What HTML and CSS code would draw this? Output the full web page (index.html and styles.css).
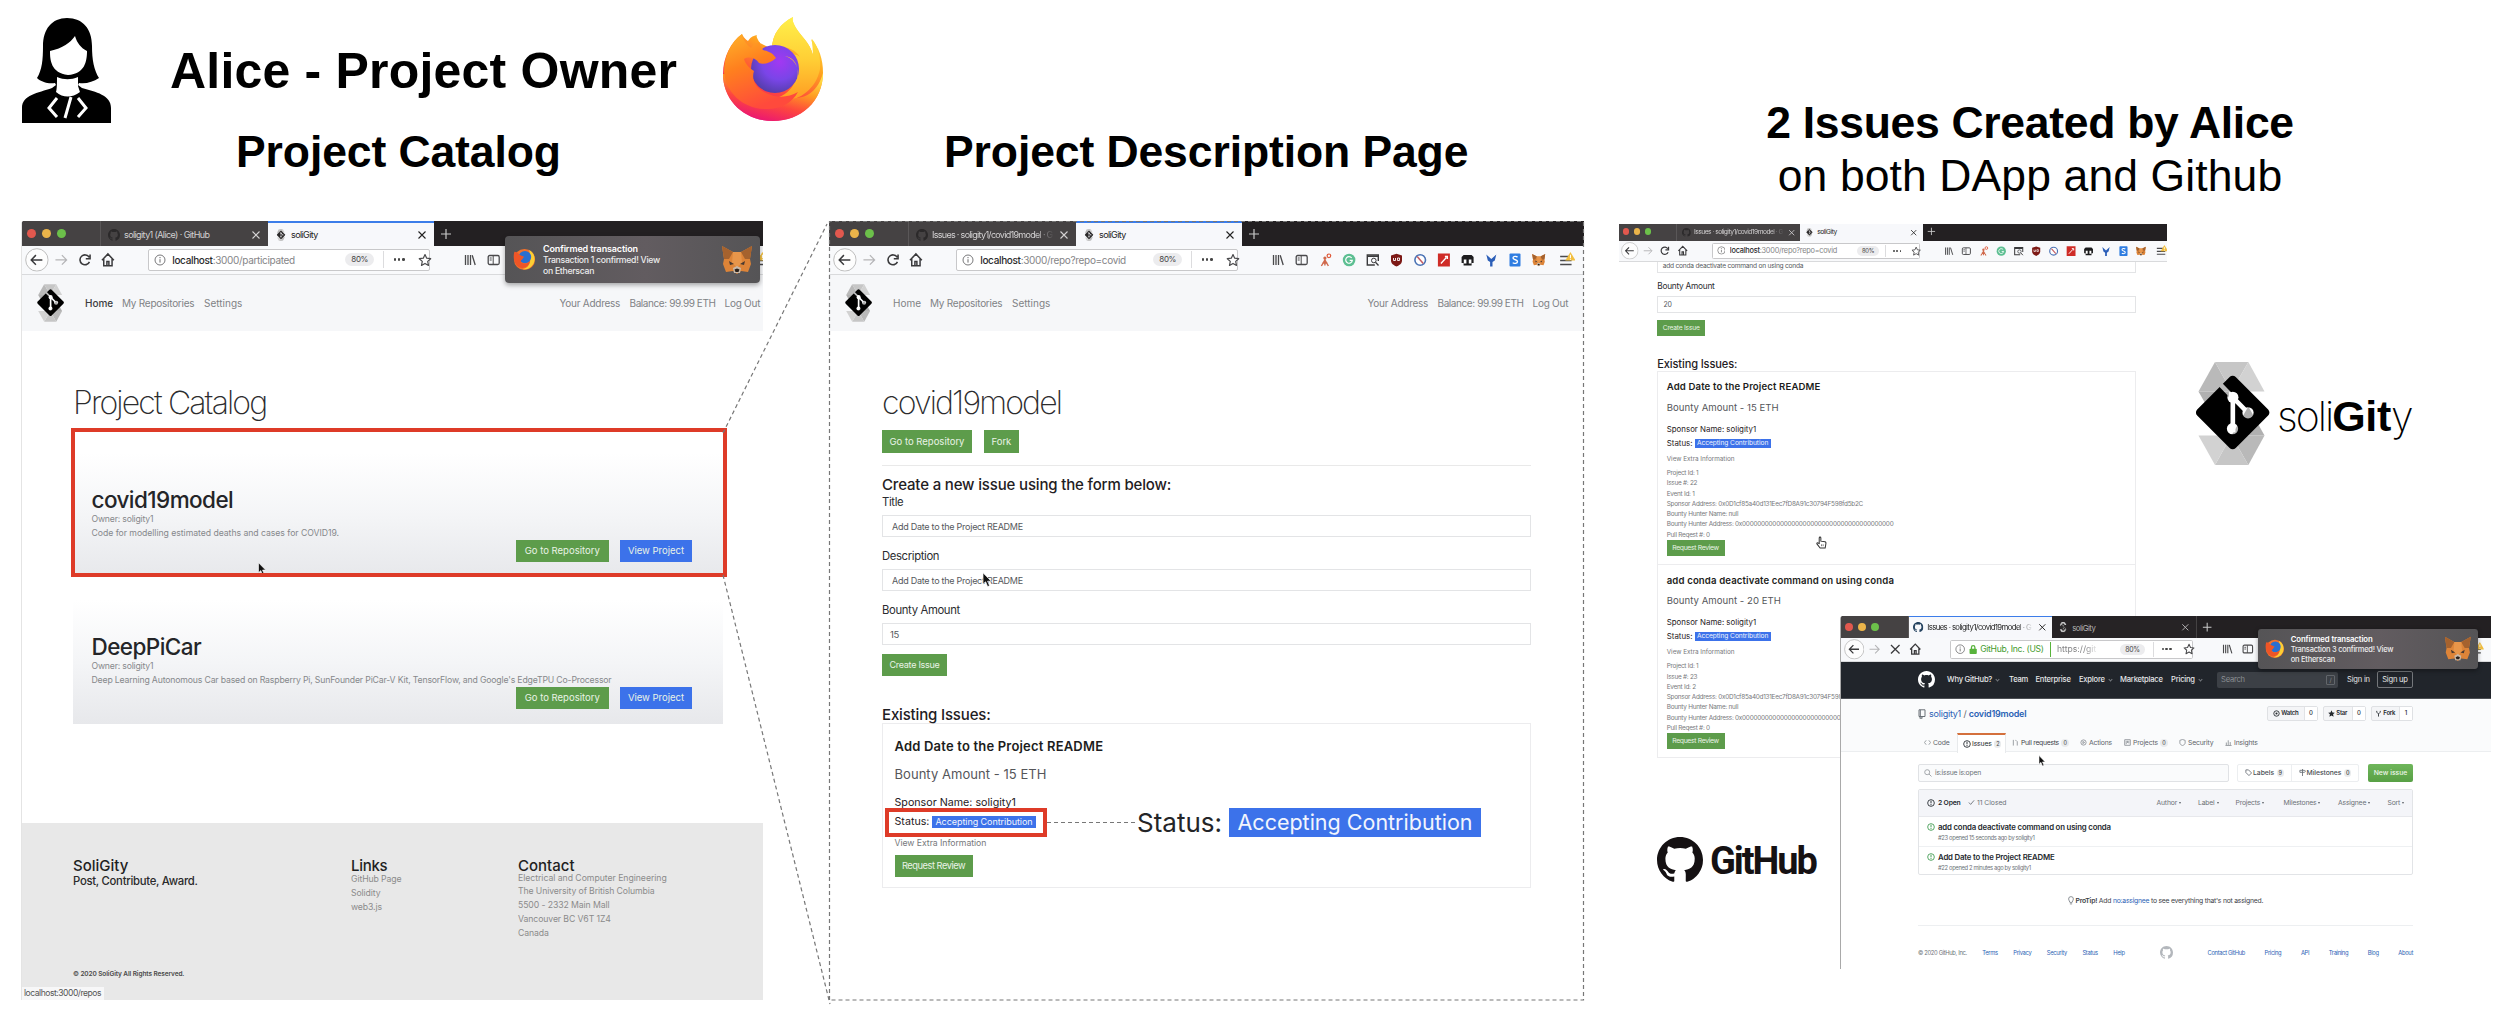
FILE: index.html
```html
<!DOCTYPE html>
<html lang="en">
<head>
<meta charset="utf-8">
<title>soliGity - project owner walkthrough</title>
<link rel="stylesheet" href="styles.css">
</head>
<body>
<svg class="defs" aria-hidden="true">
  <defs>
    <linearGradient id="ff-body" x1="0.8" y1="0" x2="0.3" y2="1"><stop offset="0" stop-color="#fff44f"/><stop offset=".35" stop-color="#ffa61f"/><stop offset=".65" stop-color="#ff4a3a"/><stop offset="1" stop-color="#e8107a"/></linearGradient>
    <linearGradient id="ff-flame" x1="0.5" y1="0" x2="0.5" y2="1"><stop offset="0" stop-color="#fff04a"/><stop offset=".5" stop-color="#ffcf35"/><stop offset="1" stop-color="#ff9a22"/></linearGradient>
    <linearGradient id="ff-fox" x1="0" y1="0" x2="0.4" y2="1"><stop offset="0" stop-color="#ffb52a"/><stop offset=".45" stop-color="#ff801e"/><stop offset="1" stop-color="#ff4a3c"/></linearGradient>
    <radialGradient id="ff-globe" cx=".6" cy=".35" r=".75"><stop offset="0" stop-color="#a238f2"/><stop offset=".5" stop-color="#7a45e8"/><stop offset="1" stop-color="#4a3c9c"/></radialGradient>
    <mask id="branch-cut" maskUnits="userSpaceOnUse" x="90" y="80" width="260" height="340">
      <rect x="90" y="80" width="260" height="340" fill="#fff"/>
      <g stroke="#000" stroke-width="14" fill="none"><path d="M176 158 217 200 263 247M217 200V295"/></g>
      <g fill="#000"><circle cx="217" cy="200" r="17"/><circle cx="263" cy="247" r="17"/><circle cx="216" cy="295" r="17"/></g>
    </mask>
  </defs>
  <symbol id="octocat" viewBox="0 0 16 16"><path d="M8 0C3.58 0 0 3.58 0 8c0 3.54 2.29 6.53 5.47 7.59.4.07.55-.17.55-.38 0-.19-.01-.82-.01-1.49-2.01.37-2.53-.49-2.69-.94-.09-.23-.48-.94-.82-1.13-.28-.15-.68-.52-.01-.53.63-.01 1.08.58 1.23.82.72 1.21 1.87.87 2.33.66.07-.52.28-.87.51-1.07-1.78-.2-3.64-.89-3.64-3.95 0-.87.31-1.59.82-2.15-.08-.2-.36-1.02.08-2.12 0 0 .67-.21 2.2.82.64-.18 1.32-.27 2-.27s1.36.09 2 .27c1.53-1.04 2.2-.82 2.2-.82.44 1.1.16 1.92.08 2.12.51.56.82 1.27.82 2.15 0 3.07-1.87 3.75-3.65 3.95.29.25.54.73.54 1.48 0 1.07-.01 1.93-.01 2.2 0 .21.15.46.55.38A8.01 8.01 0 0016 8c0-4.42-3.58-8-8-8z"/></symbol>
  <symbol id="soligity" viewBox="100 90 232 318">
    <path fill="#b9b9b9" d="M163 93 113 182h100z"/><path fill="#c6c6c6" d="M163 93h101l-51 89z"/><path fill="#d2d2d2" d="m264 93 49 89H213z"/><path fill="#b0b0b0" d="M113 182h100l-50 88z"/>
    <path fill="#b9b9b9" d="m264 405 49-89H213z"/><path fill="#c6c6c6" d="M264 405H163l50-89z"/><path fill="#d2d2d2" d="m163 405-50-89h100z"/><path fill="#b0b0b0" d="M313 316H213l51-88z"/>
    <path fill="#fff" d="M205 184h20v122h-20z"/>
    <g mask="url(#branch-cut)"><rect x="134" y="163.500" width="165" height="165" rx="13" transform="rotate(45 216.500 246)"/></g>
  </symbol>
  <symbol id="back" viewBox="0 0 24 24"><circle cx="12" cy="12" r="11.300" fill="#fdfdfd" stroke="#bdbdbd"/><path d="M17.500 12h-11M11 7.200 6.300 12l4.700 4.800" fill="none" stroke="#3a3a3c" stroke-width="1.500"/></symbol>
  <symbol id="forward" viewBox="0 0 24 24"><path d="M6.500 12h11M13 7.200l4.700 4.800-4.700 4.800" fill="none" stroke="#b5b5b7" stroke-width="1.300"/></symbol>
  <symbol id="reload" viewBox="0 0 24 24"><path d="M16.300 9.300A5 5 0 1 0 16.600 14M17.200 6.500v4.300h-4.300" fill="none" stroke="#3a3a3c" stroke-width="1.600"/></symbol>
  <symbol id="stop" viewBox="0 0 24 24"><path d="m7 7 10 10M17 7 7 17" fill="none" stroke="#3a3a3c" stroke-width="1.500"/></symbol>
  <symbol id="home" viewBox="0 0 24 24"><path d="M6 12.300 12 6l6 6.300M7.800 11v6.800h8.400V11M11 17.500v-4h2v4" fill="none" stroke="#3a3a3c" stroke-width="1.500"/></symbol>
  <symbol id="info" viewBox="0 0 12 12"><circle cx="6" cy="6" r="5" fill="none" stroke="#6a6a6c" stroke-width=".9"/><path d="M6 5.200v3.400M6 3v1.200" stroke="#6a6a6c"/></symbol>
  <symbol id="lock" viewBox="0 0 12 12"><path d="M4 6V4a2 2 0 0 1 4 0v2" fill="none" stroke="#58b33c" stroke-width="1.500"/><rect x="1.800" y="5.500" width="8.400" height="6" rx="1" fill="#58b33c"/></symbol>
  <symbol id="star" viewBox="0 0 14 14"><path d="m7 1.500 1.700 3.700 4 .5-3 2.700.8 4L7 10.400l-3.500 2 .8-4-3-2.700 4-.5z" fill="none" stroke="#4a4a4c" stroke-width="1.200" stroke-linejoin="round"/></symbol>
  <symbol id="x" viewBox="0 0 10 10"><path d="m1.500 1.500 7 7m0-7-7 7" fill="none" stroke="currentColor" stroke-width="1.100"/></symbol>
  <symbol id="plus" viewBox="0 0 12 12"><path d="M6 1v10M1 6h10" fill="none" stroke="#c9c9c9" stroke-width="1.200"/></symbol>
  <symbol id="library" viewBox="0 0 14 14"><path d="M2.500 2v10M5 2v10M7.500 2v10M9.200 2.200l3 9.800" fill="none" stroke="#4a4a4c" stroke-width="1.300"/></symbol>
  <symbol id="sidebar" viewBox="0 0 14 14"><rect x="1.500" y="2.500" width="11" height="9" rx="1.500" fill="none" stroke="#4a4a4c" stroke-width="1.300"/><path d="M6.500 2.500v9M3 5h2M3 7h2" stroke="#4a4a4c"/></symbol>
  <symbol id="ext-flow" viewBox="0 0 14 14"><path d="M3 13 6.500 7 10 13M6.500 7v5.500M6.500 7V4M4 10h5" stroke="#d0694c" stroke-width="1.400" fill="none"/><circle cx="6.500" cy="5" r="1.600" fill="#d0694c"/><circle cx="10.500" cy="2.800" r="1.800" fill="none" stroke="#e05a3a" stroke-width="1.200"/></symbol>
  <symbol id="ext-g" viewBox="0 0 14 14"><circle cx="7" cy="7" r="6.300" fill="#5dbf92"/><path d="M9.600 5A3.300 3.300 0 1 0 10.200 7.400H7.600" fill="none" stroke="#fff" stroke-width="1.200"/></symbol>
  <symbol id="ext-win" viewBox="0 0 14 14"><path d="M9 12H1.500V2h11v6" fill="none" stroke="#3b3b3d" stroke-width="1.400"/><path d="M1.500 3.200h11" stroke="#3b3b3d" stroke-width="1.500"/><circle cx="8" cy="7.500" r="2.300" fill="none" stroke="#3b3b3d"/><path d="m9.700 9.300 3 3.200" stroke="#3b3b3d" stroke-width="1.300"/></symbol>
  <symbol id="ext-shield" viewBox="0 0 14 14"><path d="M7 .8 12.500 2.500v5c0 3-2.500 4.800-5.500 6-3-1.200-5.500-3-5.500-6v-5z" fill="#7d1a16"/><path d="M4 5v2.500h2V5M8 5h2v2.500H8z" fill="none" stroke="#fff" stroke-width=".9"/></symbol>
  <symbol id="ext-ban" viewBox="0 0 14 14"><circle cx="7" cy="7" r="5.300" fill="#fff" stroke="#4b73b5" stroke-width="1.600"/><path d="m4 3.500 6 7" stroke="#c35b61" stroke-width="1.500"/></symbol>
  <symbol id="ext-red" viewBox="0 0 14 14"><path d="M1 .5h12v13H1z" fill="#cf2c27"/><path d="m4 10.500 5.500-6M8 3.500h2.500V6" stroke="#fff" stroke-width="1.300" fill="none"/></symbol>
  <symbol id="ext-skull" viewBox="0 0 14 14"><path d="M3 2h8l2 2v6h-2v2.500H3V10H1V4z" fill="#1c1c1e"/><path d="M3.200 6.500h2.600v4H3.200zM8.200 6.500h2.600v4H8.200z" fill="#fff"/></symbol>
  <symbol id="ext-y" viewBox="0 0 14 14"><path d="M2 1.500 7 6l5-4.500-1.500 6L8.200 9v4.500H5.800V9L3.500 7.500z" fill="#2c5fb8"/></symbol>
  <symbol id="ext-s" viewBox="0 0 14 14"><rect x="1.500" y=".5" width="11" height="13" rx="1" fill="#2f7de1"/><path d="M9.500 4.200C8.500 3 5 3 5 5s4.500 1.500 4.500 3.500S6 11 4.800 9.600" fill="none" stroke="#fff" stroke-width="1.400"/></symbol>
  <symbol id="fox" viewBox="0 0 32 30"><path d="m1 1 11 6h8l11-6-2 13 1 5-3 8-7-1-4 3-4-3-7 1-3-8 1-5z" fill="#dd8438"/><path d="m1 1 11 6-4 7-5 0zM31 1 20 7l4 7 5 0z" fill="#a5622e"/><path d="m12 7-1 11 5 4 5-4-1-11z" fill="#e8964a"/><path d="m8 16 5 3-4 1zM24 16l-5 3 4 1z" fill="#4a3a30"/><path d="m12 23 4-2 4 2-1 5h-6z" fill="#c9b9a8"/><path d="m13.500 24.500 2.500-1 2.500 1-1 2.500h-3z" fill="#2a211c"/></symbol>
  <symbol id="menu" viewBox="0 0 14 14"><path d="M1 4h9M1 7.500h10M1 11h10" stroke="#4a4a4c" stroke-width="1.400"/><path d="m10 0 4.500 7.500h-9z" fill="#f2bf3f"/><path d="M10 2.500v2.700M10 6v.8" stroke="#fff" stroke-width=".9"/></symbol>
  <symbol id="firefox-old" viewBox="0 0 24 24"><circle cx="12" cy="12" r="11" fill="#f4722c"/><path d="M17 2c5 3 6.500 8 5 13-2 5-7 8-12 7 6-1 8-6 8-10z" fill="#fccf34"/><circle cx="12.500" cy="9.500" r="6.500" fill="#2a6fd0"/><path d="M1.500 4c2 0 4 1 5 3l5 2-2 3c-2 1-2 3 1 4 3 .8 5-.4 7-2-1 6-7 8-11 6-5-2.500-7-10-5-16z" fill="#ee5527"/></symbol>
  <symbol id="pointer" viewBox="0 0 10 16"><path d="M1 .8v11.400l2.600-2.400 2 4.800 2-.9-2-4.500h3.600z" fill="#111" stroke="#fff" stroke-width=".7"/></symbol>
  <symbol id="issue" viewBox="0 0 12 12"><circle cx="6" cy="6" r="5" fill="none" stroke="currentColor" stroke-width="1.300"/><path d="M6 2.700v3.800M6 7.600v1.600" stroke="currentColor" stroke-width="1.400"/></symbol>
  <symbol id="tools" viewBox="0 0 284 14">
    <use href="#library" x="5" width="14" height="14"/><use href="#sidebar" x="28.700" width="14" height="14"/><use href="#ext-flow" x="52.400" width="14" height="14"/><use href="#ext-g" x="76.100" width="14" height="14"/><use href="#ext-win" x="99.800" width="14" height="14"/><use href="#ext-shield" x="123.500" width="14" height="14"/><use href="#ext-ban" x="147.200" width="14" height="14"/><use href="#ext-red" x="170.900" width="14" height="14"/><use href="#ext-skull" x="194.600" width="14" height="14"/><use href="#ext-y" x="218.300" width="14" height="14"/><use href="#ext-s" x="242" width="14" height="14"/><use href="#fox" x="265.700" width="14" height="14"/>
  </symbol>
</svg>

<main class="board">
  <svg class="alice" viewBox="22 18 89 105">
    <path d="M67 18c-15 0-24 11-24 28 0 14-1 24-6 32 4 4 11 6 18 5l1 2-4 3c-14 5-30 7-30 20v15h89v-15c0-13-15-16-29-20l-4-3 1-2c7 1 14-1 20-5-5-8-7-18-7-32 0-17-9-28-25-28z"/>
    <path fill="#fff" d="M75 36c-5 7-12 12-25 15 0 9 1 22 18 24 17-1 19-14 19-24-6-3-10-8-12-15zM57 77c7 3 14 3 21 0v9c2 6 2 6 2 6-8 6-17 6-24 0 1-3 1-9 1-15z"/>
    <path fill="none" stroke="#fff" stroke-width="3" d="m57 98-8 10 8 9m21-19 8 10-8 9m-7-20-6 21"/>
  </svg>
  <h1 class="title title-owner">Alice - Project Owner</h1>
  <svg class="firefox" viewBox="723 17 100 104">
    <path fill="url(#ff-body)" d="M742 34c-11 8-19 23-19 40 0 27 22 47 50 47s50-20 50-48c0-14-4-26-12-34 2 6 3 11 2 16-3-12-12-19-17-27-3-5-4-8-3-11-12 6-21 17-21 32l-12-6c-3-4-4-7-3-8-5 1-7 3-9 6-4-3-5-5-6-7z"/>
    <path fill="url(#ff-flame)" d="M793 17c-12 6-21 17-21 32 9-3 21-3 28 8-4-3-8-3-10-1 8 8 8 22 2 31-6 8-14 12-24 12 26 8 48-8 52-30 1-11-2-23-8-30l1 16c-3-12-12-19-17-27-3-5-4-8-3-11z"/>
    <path fill="url(#ff-body)" d="M723 74c0 27 22 47 50 47s50-20 50-48c-6 22-22 28-38 24-20 8-36-4-40-22z" opacity=".85"/>
    <circle cx="775" cy="69" r="24" fill="url(#ff-globe)"/>
    <path fill="url(#ff-fox)" d="M742 34c-11 8-18 22-18 38 2 20 18 36 40 37 16 1 28-6 34-17-10 6-22 6-32 1-10-5-15-13-12-22-5-3-9-8-10-12 5-3 12-1 15 4 4 2 12 0 17-5-4-6-9-7-13-8-3-4-4-7-3-8-5 1-7 3-9 6-4-3-8-8-9-14z"/>
    <path fill="#ffc031" d="M785 56c12 2 17 16 9 31 7-10 6-26-9-31z"/>
  </svg>
  <h2 class="title title-catalog">Project Catalog</h2>
  <h2 class="title title-description">Project Description Page</h2>
  <h2 class="title title-issues">2 Issues Created by Alice<br><span class="light">on both DApp and Github</span></h2>

  <!-- Project catalog -->
  <section class="window win-catalog">
    <div class="chrome">
      <div class="tabs">
        <div class="lights"><i class="red"></i><i class="amber"></i><i class="green"></i></div>
        <div class="tab"><svg class="tab-ico"><use href="#octocat"/></svg><span>soligity1 (Alice) · GitHub</span><svg class="close"><use href="#x"/></svg></div>
        <div class="tab active"><svg class="tab-ico"><use href="#soligity"/></svg><span>soliGity</span><svg class="close"><use href="#x"/></svg></div>
        <div class="strip"><svg class="add"><use href="#plus"/></svg></div>
      </div>
      <div class="toolbar">
        <svg class="nav-ico"><use href="#back"/></svg><svg class="nav-ico"><use href="#forward"/></svg><svg class="nav-ico"><use href="#reload"/></svg><svg class="nav-ico"><use href="#home"/></svg>
        <div class="url"><svg class="url-ico"><use href="#info"/></svg><span class="addr"><b>localhost</b>:3000/participated</span><span class="zoomed">80%</span><span class="dots"><i></i><i></i><i></i></span><svg class="fav"><use href="#star"/></svg></div>
        <svg class="tools"><use href="#tools"/></svg>
        <svg class="burger"><use href="#menu"/></svg>
      </div>
    </div>
    <nav class="site-nav">
      <svg class="logo"><use href="#soligity"/></svg>
      <a class="nav-home on">Home</a><a class="nav-repos">My Repositories</a><a class="nav-settings">Settings</a>
      <a class="nav-addr">Your Address</a><a class="nav-balance">Balance: 99.99 ETH</a><a class="nav-out">Log Out</a>
    </nav>
    <div class="page">
      <h3 class="page-title">Project Catalog</h3>
      <article class="project">
        <h4>covid19model</h4>
        <p>Owner: soligity1</p>
        <p class="desc">Code for modelling estimated deaths and cases for COVID19.</p>
        <div class="actions"><a class="btn">Go to Repository</a><a class="btn blue">View Project</a></div>
      </article>
      <article class="project">
        <h4>DeepPiCar</h4>
        <p>Owner: soligity1</p>
        <p class="desc desc-long">Deep Learning Autonomous Car based on Raspberry Pi, SunFounder PiCar-V Kit, TensorFlow, and Google's EdgeTPU Co-Processor</p>
        <div class="actions"><a class="btn">Go to Repository</a><a class="btn blue">View Project</a></div>
      </article>
    </div>
    <footer class="site-foot">
      <div class="foot-brand"><h5>SoliGity</h5><h6>Post, Contribute, Award.</h6></div>
      <div class="foot-links"><h5>Links</h5><p>GitHub Page</p><p>Solidity</p><p>web3.js</p></div>
      <div class="foot-contact"><h5>Contact</h5><p>Electrical and Computer Engineering</p><p>The University of British Columbia</p><p>5500 - 2332 Main Mall</p><p>Vancouver BC V6T 1Z4</p><p>Canada</p></div>
      <p class="copyright">© 2020 SoliGity All Rights Reserved.</p>
      <p class="status-tip">localhost:3000/repos</p>
    </footer>
    <svg class="cursor cursor-catalog"><use href="#pointer"/></svg>
    <div class="toast">
      <svg class="toast-ff"><use href="#firefox-old"/></svg>
      <div class="toast-text"><b>Confirmed transaction</b><span>Transaction 1 confirmed! View</span><span>on Etherscan</span></div>
      <svg class="toast-fox"><use href="#fox"/></svg>
    </div>
  </section>
  <div class="frame frame-project"></div>

  <!-- Project description -->
  <section class="window win-project">
    <div class="chrome">
      <div class="tabs">
        <div class="lights"><i class="red"></i><i class="amber"></i><i class="green"></i></div>
        <div class="tab"><svg class="tab-ico"><use href="#octocat"/></svg><span class="fade">Issues · soligity1/covid19model · G</span><svg class="close"><use href="#x"/></svg></div>
        <div class="tab active"><svg class="tab-ico"><use href="#soligity"/></svg><span>soliGity</span><svg class="close"><use href="#x"/></svg></div>
        <div class="strip"><svg class="add"><use href="#plus"/></svg></div>
      </div>
      <div class="toolbar">
        <svg class="nav-ico"><use href="#back"/></svg><svg class="nav-ico"><use href="#forward"/></svg><svg class="nav-ico"><use href="#reload"/></svg><svg class="nav-ico"><use href="#home"/></svg>
        <div class="url"><svg class="url-ico"><use href="#info"/></svg><span class="addr"><b>localhost</b>:3000/repo?repo=covid</span><span class="zoomed">80%</span><span class="dots"><i></i><i></i><i></i></span><svg class="fav"><use href="#star"/></svg></div>
        <svg class="tools"><use href="#tools"/></svg>
        <svg class="burger"><use href="#menu"/></svg>
      </div>
    </div>
    <nav class="site-nav">
      <svg class="logo"><use href="#soligity"/></svg>
      <a class="nav-home">Home</a><a class="nav-repos">My Repositories</a><a class="nav-settings">Settings</a>
      <a class="nav-addr">Your Address</a><a class="nav-balance">Balance: 99.99 ETH</a><a class="nav-out">Log Out</a>
    </nav>
    <div class="page">
      <h3 class="page-title">covid19model</h3>
      <div class="repo-actions"><a class="btn">Go to Repository</a><a class="btn fork">Fork</a></div>
      <h4 class="section-title">Create a new issue using the form below:</h4>
      <label>Title</label><div class="input">Add Date to the Project README</div>
      <label>Description</label><div class="input">Add Date to the Project README</div>
      <label>Bounty Amount</label><div class="input num">15</div>
      <a class="btn create">Create Issue</a>
      <h4 class="section-title existing">Existing Issues:</h4>
      <article class="issue">
        <h5>Add Date to the Project README</h5>
        <h6>Bounty Amount - 15 ETH</h6>
        <p class="meta">Sponsor Name: soligity1</p>
        <p class="meta">Status: <mark>Accepting Contribution</mark></p>
        <p class="extra">View Extra Information</p>
        <a class="btn review">Request Review</a>
      </article>
    </div>
    <svg class="cursor cursor-project"><use href="#pointer"/></svg>
  </section>
  <div class="frame frame-status"></div>
  <p class="callout">Status: <mark>Accepting Contribution</mark></p>

  <!-- Issues on the DApp -->
  <section class="window win-issues">
    <div class="chrome">
      <div class="tabs">
        <div class="lights"><i class="red"></i><i class="amber"></i><i class="green"></i></div>
        <div class="tab"><svg class="tab-ico"><use href="#octocat"/></svg><span class="fade">Issues · soligity1/covid19model · G</span><svg class="close"><use href="#x"/></svg></div>
        <div class="tab active"><svg class="tab-ico"><use href="#soligity"/></svg><span>soliGity</span><svg class="close"><use href="#x"/></svg></div>
        <div class="strip"><svg class="add"><use href="#plus"/></svg></div>
      </div>
      <div class="toolbar">
        <svg class="nav-ico"><use href="#back"/></svg><svg class="nav-ico"><use href="#forward"/></svg><svg class="nav-ico"><use href="#reload"/></svg><svg class="nav-ico"><use href="#home"/></svg>
        <div class="url"><svg class="url-ico"><use href="#info"/></svg><span class="addr"><b>localhost</b>:3000/repo?repo=covid</span><span class="zoomed">80%</span><span class="dots"><i></i><i></i><i></i></span><svg class="fav"><use href="#star"/></svg></div>
        <svg class="tools"><use href="#tools"/></svg>
        <svg class="burger"><use href="#menu"/></svg>
      </div>
    </div>
    <div class="page">
      <div class="input cut">add conda deactivate command on using conda</div>
      <label>Bounty Amount</label><div class="input num">20</div>
      <a class="btn create">Create Issue</a>
      <h4 class="section-title existing">Existing Issues:</h4>
      <article class="issue">
        <h5>Add Date to the Project README</h5>
        <h6>Bounty Amount - 15 ETH</h6>
        <p class="meta">Sponsor Name: soligity1</p>
        <p class="meta">Status: <mark>Accepting Contribution</mark></p>
        <p class="extra">View Extra Information</p>
        <div class="details"><p>Project Id: 1</p><p>Issue #: 22</p><p>Event Id: 1</p><p>Sponsor Address: 0x0D1cf85a40d131Eec7fD8A91c30794F598fd5b2C</p><p>Bounty Hunter Name: null</p><p>Bounty Hunter Address: 0x0000000000000000000000000000000000000000</p><p>Pull Reqest #: 0</p></div>
        <a class="btn review">Request Review</a>
      </article>
      <article class="issue">
        <h5>add conda deactivate command on using conda</h5>
        <h6>Bounty Amount - 20 ETH</h6>
        <p class="meta">Sponsor Name: soligity1</p>
        <p class="meta">Status: <mark>Accepting Contribution</mark></p>
        <p class="extra">View Extra Information</p>
        <div class="details"><p>Project Id: 1</p><p>Issue #: 23</p><p>Event Id: 2</p><p>Sponsor Address: 0x0D1cf85a40d131Eec7fD8A91c30794F598fd5b2C</p><p>Bounty Hunter Name: null</p><p>Bounty Hunter Address: 0x0000000000000000000000000000000000000000</p><p>Pull Reqest #: 0</p></div>
        <a class="btn review">Request Review</a>
      </article>
    </div>
  </section>
  <svg class="hand" viewBox="0 0 12 14"><path d="M3.500 8V2c0-1.300 1.800-1.300 1.800 0v3.500l4.500.8c1 .2 1.200 1 1 2L10 13H4.500L1 8.500c-.5-1 .6-1.700 1.300-1z" fill="#fff" stroke="#333" stroke-width="1.100"/><path d="M6 9v2M7.800 9v2" stroke="#333" stroke-width=".7"/></svg>

  <!-- Issues on GitHub -->
  <section class="window win-github">
    <div class="chrome">
      <div class="tabs">
        <div class="lights"><i class="red"></i><i class="amber"></i><i class="green"></i></div>
        <div class="tab active"><svg class="tab-ico tint"><use href="#octocat"/></svg><span class="fade">Issues · soligity1/covid19model · G</span><svg class="close"><use href="#x"/></svg></div>
        <div class="tab dim"><svg class="tab-ico"><use href="#soligity"/></svg><span>soliGity</span><svg class="close"><use href="#x"/></svg></div>
        <div class="strip"><svg class="add"><use href="#plus"/></svg></div>
      </div>
      <div class="toolbar">
        <svg class="nav-ico"><use href="#back"/></svg><svg class="nav-ico"><use href="#forward"/></svg><svg class="nav-ico"><use href="#stop"/></svg><svg class="nav-ico"><use href="#home"/></svg>
        <div class="url"><svg class="url-ico"><use href="#info"/></svg><svg class="lock"><use href="#lock"/></svg><span class="owner">GitHub, Inc. (US)</span><span class="addr cutoff">https://git</span><span class="zoomed">80%</span><span class="dots"><i></i><i></i><i></i></span><svg class="fav"><use href="#star"/></svg></div>
        <svg class="tools"><use href="#tools"/></svg>
        <svg class="burger"><use href="#menu"/></svg>
      </div>
      <div class="toast">
        <svg class="toast-ff"><use href="#firefox-old"/></svg>
        <div class="toast-text"><b>Confirmed transaction</b><span>Transaction 3 confirmed! View</span><span>on Etherscan</span></div>
        <svg class="toast-fox"><use href="#fox"/></svg>
      </div>
    </div>
    <header class="gh-head">
      <svg class="gh-mark"><use href="#octocat"/></svg>
      <a class="gh-why">Why GitHub?<i class="chev"></i></a><a class="gh-team">Team</a><a class="gh-ent">Enterprise</a><a class="gh-exp">Explore<i class="chev"></i></a><a class="gh-mkt">Marketplace</a><a class="gh-price">Pricing<i class="chev"></i></a>
      <div class="gh-search"><span>Search</span><kbd>/</kbd></div>
      <a class="gh-in">Sign in</a><a class="gh-up">Sign up</a>
    </header>
    <div class="gh-repo">
      <div class="gh-title">
        <svg class="book" viewBox="0 0 8 10"><path d="M1 .8h6v6.700H1zM2.300.8v6.700M2 7.500v2l1-.7 1 .7v-2" fill="none" stroke="#8b9096" stroke-width=".8"/></svg>
        <span class="gh-name"><a>soligity1</a> / <a class="strong">covid19model</a></span>
        <div class="counter w-watch"><span><svg viewBox="0 0 8 8"><circle cx="4" cy="4" r="3.100"/><circle class="solid" cx="4" cy="4" r="1.200"/></svg>Watch</span><b>0</b></div>
        <div class="counter w-star"><span><svg viewBox="0 0 8 8"><path class="solid" d="m4 .3 1.100 2.500 2.700.3-2 1.800.6 2.700L4 6.200 1.600 7.600l.6-2.700-2-1.800 2.700-.3z"/></svg>Star</span><b>0</b></div>
        <div class="counter w-fork"><span><svg viewBox="0 0 8 8"><path d="M2 1v1.500L4 4.500l2-2V1M4 4.500V7.500"/></svg>Fork</span><b>1</b></div>
      </div>
      <div class="gh-tabs">
        <a class="t-code"><svg viewBox="0 0 8 8"><path d="M2.500 1.500 0.500 4l2 2.500m3-5 2 2.500-2 2.500"/></svg>Code</a>
        <a class="t-issues"><svg viewBox="0 0 12 12"><use href="#issue"/></svg>Issues<em>2</em></a>
        <a class="t-pull"><svg viewBox="0 0 8 8"><path d="M1.500 1v6.500M6 7.500V3L4.500 1.500H4"/></svg>Pull requests<em>0</em></a>
        <a class="t-act"><svg viewBox="0 0 8 8"><circle cx="4" cy="4" r="3"/><path d="M3.300 2.800v2.400L5.300 4z"/></svg>Actions</a>
        <a class="t-proj"><svg viewBox="0 0 8 8"><path d="M.8.800h6.400v6.400H.8zM2.500 2v4M4 2v2.500M5.500 2v3"/></svg>Projects<em>0</em></a>
        <a class="t-sec"><svg viewBox="0 0 8 8"><path d="M4 .6 7 1.500v3c0 1.500-1.500 2.500-3 3-1.500-.5-3-1.500-3-3v-3z"/></svg>Security</a>
        <a class="t-ins"><svg viewBox="0 0 8 8"><path d="M.5 7.500h7M1.500 7V4M3.700 7V1.500M6 7V3.500"/></svg>Insights</a>
      </div>
    </div>
    <div class="gh-body">
      <div class="gh-filter">
        <div class="gh-query"><svg viewBox="0 0 8 8"><circle cx="3.200" cy="3.200" r="2.500"/><path d="m5 5 2.500 2.500"/></svg>is:issue is:open</div>
        <div class="gh-subnav"><a class="s-lab"><svg viewBox="0 0 8 8"><path d="M1 1h3l3.500 3.500-3 3L1 4z"/></svg>Labels<em>9</em></a><a><svg viewBox="0 0 8 8"><path d="M4 0v8M1 1.500h5l1.500 1L6 3.800H1z"/></svg>Milestones<em>0</em></a></div>
        <a class="gh-new">New issue</a>
      </div>
      <div class="gh-list">
        <div class="gh-list-head">
          <svg class="dot" viewBox="0 0 12 12"><use href="#issue"/></svg><b>2 Open</b><svg class="tick" viewBox="0 0 8 8"><path d="m1 4 2 2.200L7 1.500"/></svg><span class="closed">11 Closed</span>
          <span class="f-author">Author<i></i></span><span class="f-label">Label<i></i></span><span class="f-proj">Projects<i></i></span><span class="f-mile">Milestones<i></i></span><span class="f-assign">Assignee<i></i></span><span class="f-sort">Sort<i></i></span>
        </div>
        <div class="gh-row"><svg class="dot open" viewBox="0 0 12 12"><use href="#issue"/></svg><div><b>add conda deactivate command on using conda</b><small>#23 opened 15 seconds ago by soligity1</small></div></div>
        <div class="gh-row"><svg class="dot open" viewBox="0 0 12 12"><use href="#issue"/></svg><div><b>Add Date to the Project README</b><small>#22 opened 2 minutes ago by soligity1</small></div></div>
      </div>
      <p class="gh-tip"><svg viewBox="0 0 8 12"><path d="M2.500 8.500C2.500 7 .8 6 .8 4a3.200 3.200 0 0 1 6.400 0c0 2-1.700 3-1.700 4.500zM2.500 10.500h3"/></svg><b>ProTip!</b> Add <a>no:assignee</a> to see everything that's not assigned.</p>
      <div class="gh-foot">
        <div class="foot-left"><span>© 2020 GitHub, Inc.</span><a>Terms</a><a>Privacy</a><a>Security</a><a>Status</a><a>Help</a></div>
        <svg><use href="#octocat"/></svg>
        <div class="foot-right"><a>Contact GitHub</a><a>Pricing</a><a>API</a><a>Training</a><a>Blog</a><a>About</a></div>
      </div>
    </div>
    <svg class="cursor cursor-github"><use href="#pointer"/></svg>
  </section>

  <div class="brand-soligity"><svg><use href="#soligity"/></svg><span>soli<b>Git</b>y</span></div>
  <div class="brand-github"><svg><use href="#octocat"/></svg><span>GitHub</span></div>

  <svg class="wires" viewBox="0 0 2520 1024">
    <path d="M829.500 1000V221.500H1583.500V1000Z"/>
    <path d="M723 433 827 224M723 575 830 1004M1047 822.500H1137"/>
  </svg>
</main>
</body>
</html>
```
FILE: styles.css
```css
* { box-sizing: border-box; }
body { margin: 0; background: #fff; font-family: Inter, "Liberation Sans", sans-serif; color: #222; }
h1, h2, h3, h4, h5, h6, p { margin: 0; font-weight: inherit; }
svg { display: block; flex: none; }
em, i, mark { font-style: normal; }
.defs { position: absolute; width: 0; height: 0; }
.board { position: relative; width: 2520px; height: 1024px; overflow: hidden; white-space: nowrap; }

/* Slide headings */
.title { position: absolute; color: #000; font: 700 44.5px/53px "Liberation Sans", Arial, sans-serif; letter-spacing: -.1px; text-align: center; }
.title .light { font-weight: 400; letter-spacing: .1px; }
.title-owner { left: 170px; top: 41px; font-size: 50px; line-height: 60px; letter-spacing: .2px; }
.title-catalog { left: 236px; top: 125px; }
.title-description { left: 944px; top: 125px; }
.title-issues { left: 1764px; top: 96px; width: 532px; letter-spacing: -.3px; }
.alice { position: absolute; left: 22px; top: 18px; width: 89px; height: 105px; }
.firefox { position: absolute; left: 723px; top: 17px; width: 100px; height: 104px; }

/* Browser windows */
.window { position: absolute; display: flex; flex-direction: column; overflow: hidden; background: #fff; }
.win-catalog { left: 21px; top: 221px; width: 742px; height: 779px; border-left: 1px solid #e4e4e4; border-radius: 3px 0 0 0; }
.win-project { left: 829px; top: 221px; width: 755px; height: 779px; }
.win-issues { left: 2196.700px; top: 303.900px; width: 743.5px; height: 800px; zoom: .737; }
.win-github { left: 1840px; top: 616px; width: 651px; height: 353px; border-left: 1px solid #a9a9a9; border-radius: 3px 0 0 0; }
.win-issues .chrome { margin-top: -2px; }
.win-github .chrome { zoom: .863; position: relative; }
.tabs { display: flex; height: 25px; background: #232022; }
.lights { display: flex; align-items: center; gap: 6px; width: 79px; padding-left: 5px; background: #454243; border-right: 1px solid #5a5758; }
.lights i { width: 9px; height: 9px; border-radius: 50%; }
.win-project .lights { padding-left: 6px; width: 80px; }
.red { background: #e2584e; } .amber { background: #ebb44a; } .green { background: #6cc04a; }
.tab { display: flex; align-items: center; width: 167px; padding: 2px 7px 0 7px; background: #454243; color: #d3d1d2; font-size: 9px; }
.tab span { flex: 1; letter-spacing: -.6px; overflow: hidden; }
.tab .fade { letter-spacing: -.7px; }
.tab.active { width: 166px; background: #f7f8fb; color: #222; border-top: 2px solid #3c7de9; padding-top: 0; }
.tab.dim { background: #262325; border-right: 1px solid #454243; color: #b5b3b4; }
.win-issues .tab.active { border-top-color: #cfe6f5; }
.win-github .tab.active { padding-left: 5px; width: 166px; }
.tab-ico { width: 12px; height: 12px; margin-right: 4px; fill: #2b292a; }
.tint { fill: #24425f; }
.close { width: 10px; height: 10px; }
.fade { -webkit-mask-image: linear-gradient(90deg, #000 85%, transparent); mask-image: linear-gradient(90deg, #000 85%, transparent); margin-right: 5px; }
.strip { flex: 1; display: flex; align-items: center; padding-left: 6px; }
.add { width: 12px; height: 12px; }
.toolbar { position: relative; display: flex; align-items: center; height: 28.5px; padding-left: 3px; background: #f8f9fb; border-bottom: 1px solid #d9dadc; }
.win-project .toolbar { padding-left: 4px; }
.nav-ico { width: 23.800px; height: 23.800px; }
.url { display: flex; align-items: center; flex: none; width: 282px; height: 22px; margin-left: 28px; border: 1px solid #c8c8ca; border-radius: 2px; background: #fff; font-size: 10px; }
.url-ico { width: 12px; height: 12px; margin: 0 6px 0 5px; }
.addr { flex: none; width: 173px; color: #858587; letter-spacing: -.33px; overflow: hidden; }
.addr b { font-weight: 500; color: #2a2a2c; }
.zoomed { flex: none; width: 29px; height: 13px; border-radius: 7px; background: #ececee; color: #444; font-size: 8px; line-height: 13px; text-align: center; letter-spacing: -.4px; }
.dots { flex: none; display: flex; justify-content: center; gap: 1.800px; width: 31px; height: 17px; margin: 0 4px 0 9px; align-items: center; border-left: 1px solid #dcdcde; }
.dots i { width: 2.600px; height: 2.600px; border-radius: 50%; background: #444; }
.fav { width: 14px; height: 14px; }
.tools { width: 284px; height: 14px; margin-left: 28px; }
.burger { width: 16px; height: 16px; margin-left: 9px; }
.lock { width: 12px; height: 12px; margin: 0 2px 0 -3px; }
.owner { flex: none; width: 82px; padding-right: 4px; margin-right: 7px; border-right: 1px solid #58b33c; color: #3f9b2d; letter-spacing: -.35px; line-height: 17px; }
.addr.cutoff { width: 73px; -webkit-mask-image: linear-gradient(90deg, #000 45%, transparent 66%); mask-image: linear-gradient(90deg, #000 45%, transparent 66%); letter-spacing: 0; }
.toast { position: absolute; right: 3px; top: 15px; width: 255px; height: 47px; display: flex; align-items: center; padding: 0 7px 0 8px; border-radius: 4px; background: linear-gradient(90deg, #555456, #625c60 55%, #555456); box-shadow: 0 2px 5px rgba(0, 0, 0, .35); color: #fff; }
.win-github .toast { right: 15px; }
.toast-ff { width: 23px; height: 23px; }
.toast-text { flex: 1; padding-left: 7px; font-size: 8.700px; line-height: 11px; letter-spacing: -.29px; color: #ececec; font-weight: 500; }
.toast-text b { display: block; font-size: 9px; font-weight: 600; letter-spacing: -.13px; line-height: 13px; color: #fff; }
.toast-text span { display: block; }
.toast-fox { width: 32px; height: 30px; }

/* soliGity pages */
.site-nav { display: flex; align-items: center; height: 56.500px; padding-left: 14px; background: #f6f7f9; font-size: 10px; color: #808285; letter-spacing: -.25px; }
.logo { width: 29px; height: 38px; margin-right: 20px; }
.site-nav .on { color: #3c3d40; font-weight: 500; }
.nav-home { width: 37px; letter-spacing: 0; } .nav-repos { width: 82px; } .nav-settings { width: 355.500px; letter-spacing: 0; }
.nav-addr { width: 70px; } .nav-balance { width: 95px; letter-spacing: -.41px; }
.win-project .site-nav { padding-left: 15px; }
.page { padding: 0 53px; width: 755px; }
.win-catalog .page { width: 741px; height: 492px; padding-right: 40.500px; padding-left: 51px; }
.win-issues .page { width: 743.5px; padding: 1.4px 41.5px 0 52px; }
.page-title { padding-top: 52px; height: 91px; font-size: 32px; line-height: 40px; font-weight: 200; letter-spacing: -1.850px; color: #2c2c2e; }
.project { height: 124px; margin-bottom: 23px; padding: 34.700px 30.500px 0 18.500px; background: linear-gradient(#fff, #f4f5f7 50%, #e7e8eb); color: #86888b; font-size: 8.700px; }
.page-title + .project { margin-top: 31px; }
.project h4 { font-size: 22.500px; line-height: 24px; font-weight: 500; letter-spacing: -.570px; color: #242528; }
.project p { line-height: 14px; letter-spacing: -.2px; }
.project .desc { line-height: 15px; letter-spacing: -.05px; }
.project .desc-long { letter-spacing: -.165px; }
.actions { display: flex; justify-content: flex-end; gap: 11.500px; margin-top: -1px; }
.btn { display: block; height: 22px; padding: 0 7.500px; background: #5d9c4b; color: #e9f3e6; font-size: 9.500px; line-height: 22px; }
.btn.blue { background: #3c72ea; }
.actions .btn { width: 92.500px; padding: 0; text-align: center; }
.actions .btn.blue { width: 72px; }
.site-foot { position: relative; flex: 1; display: flex; background: #e8e8e8; padding: 34px 0 0 51px; color: #8b8b8b; font-size: 8.700px; }
.site-foot h5 { font-size: 15px; line-height: 18px; font-weight: 500; color: #1f1f1f; }
.site-foot h6 { font-size: 11.300px; line-height: 12px; font-weight: 500; letter-spacing: -.280px; color: #2b2b2b; }
.site-foot p { line-height: 13.800px; letter-spacing: -.1px; }
.site-foot h5 + p { margin-top: -3.500px; }
.foot-links p { line-height: 14.300px; }
.foot-brand { width: 278px; } .foot-links { width: 167px; } .foot-links h5 { letter-spacing: -.3px; }
.foot-contact p:nth-child(2) { letter-spacing: -.04px; }
.site-foot .copyright { position: absolute; left: 51px; bottom: 18px; font-size: 6.500px; font-weight: 600; color: #4a4a4a; }
.site-foot .status-tip { position: absolute; left: 0; bottom: 0; width: 82px; height: 13px; padding-left: 2px; background: #f7f7f8; color: #555; font-size: 8.500px; line-height: 13px; letter-spacing: -.450px; }
.repo-actions { display: flex; gap: 12px; height: 43.500px; padding-top: 8px; border-bottom: 1px solid #e9e9e9; margin-bottom: 9px; }
.repo-actions .btn { height: 23px; line-height: 23px; }
.section-title { font-size: 15px; line-height: 20px; font-weight: 500; letter-spacing: -.160px; color: #1f2023; }
label { display: block; margin-top: 10.500px; font-size: 11.300px; line-height: 16px; letter-spacing: -.360px; color: #2b2c2f; }
.section-title + label { margin-top: -1px; }
.input { height: 22.500px; margin-top: 5px; padding-left: 9px; border: 1px solid #e3e4e6; font-size: 9px; line-height: 21px; letter-spacing: -.260px; color: #55585c; }
.input.num { padding-left: 7px; font-size: 9.500px; }
.input.cut { margin-top: -8.700px; line-height: 24px; padding-left: 6px; letter-spacing: -.310px; }
.btn.create { width: 64.500px; margin-top: 9px; font-size: 9px; letter-spacing: -.280px; }
.existing { margin-top: 30px; line-height: 18px; margin-bottom: -.700px; }
.issue { border: 1px solid #ececee; padding: 12px 11.500px 10px; }
.win-issues .issue + .issue { margin-top: -1px; border-top-width: 2px; }
.issue h5 { font-size: 13px; line-height: 20px; font-weight: 600; letter-spacing: .190px; color: #1c1d20; }
.issue h6 { margin-top: 8px; font-size: 13px; line-height: 20px; color: #55565a; letter-spacing: .050px; }
.meta { display: flex; align-items: center; gap: 3px; font-size: 10.700px; line-height: 18.500px; height: 18.500px; color: #1f2023; }
.issue h6 + .meta { margin-top: 10px; }
mark { background: #3c72ea; color: #f2f5fd; }
.meta mark { height: 12.500px; padding: 0 3px; font-size: 9px; line-height: 12.500px; letter-spacing: -.060px; }
.extra { margin: 4.600px 0 5px; font-size: 8.700px; line-height: 14px; letter-spacing: -.050px; color: #77797c; }
.btn.review { width: 78.500px; font-size: 9.300px; letter-spacing: -.480px; }
.win-issues .extra { margin-bottom: 6px; margin-top: 4.200px; }
.details { font-size: 8.700px; line-height: 13.900px; letter-spacing: -.350px; color: #77797c; }

/* Highlights and callout */
.frame { position: absolute; border: 4px solid #de3b28; }
.frame-project { left: 71px; top: 428px; width: 656px; height: 149px; z-index: 1; }
.frame-status { left: 885px; top: 808px; width: 162px; height: 29px; }
.callout { position: absolute; left: 1137px; top: 808px; display: flex; gap: 7px; font-size: 26px; line-height: 29px; color: #242528; }
.callout mark { padding: 0 8.500px; font-size: 21.500px; }
.cursor { position: absolute; width: 10px; height: 16px; }
.cursor-catalog { left: 235px; top: 341px; height: 14px; }
.cursor-project { left: 153px; top: 351px; }
.cursor-github { left: 197px; top: 139px; width: 8px; height: 12px; }
.hand { position: absolute; left: 1816px; top: 536px; width: 11px; height: 13px; }
.wires { position: absolute; inset: 0; width: 2520px; height: 1024px; fill: none; stroke: #777; stroke-width: 1.200; stroke-dasharray: 4 3; z-index: 2; }

/* GitHub page */
.gh-head { display: flex; align-items: center; height: 36.500px; padding-left: 77px; background: #21252b; color: #e6e7e8; font-size: 7.600px; font-weight: 500; letter-spacing: -.220px; border-bottom: 1px solid #4b4e53; }
.gh-mark { width: 17px; height: 17px; margin-right: 12px; fill: #fff; }
.chev { display: inline-block; width: 3px; height: 3px; margin: 0 0 1.500px 4px; border: solid #777b80; border-width: 0 1px 1px 0; transform: rotate(45deg); }
.gh-why { width: 62px; } .gh-team { width: 26.500px; } .gh-ent { width: 43.500px; } .gh-exp { width: 41px; } .gh-mkt { width: 51px; } .gh-price { width: 46px; }
.gh-search { display: flex; align-items: center; justify-content: space-between; width: 121px; height: 16px; padding: 0 3px 0 4px; border-radius: 2px; background: #3c4046; color: #8b8f94; font-weight: 400; }
kbd { width: 9px; height: 10px; border: 1px solid #62666b; border-radius: 1px; font: 6px/8px Inter, sans-serif; text-align: center; }
.gh-in { width: 30px; margin-left: 9px; font-weight: 400; } .gh-up { width: 36px; height: 17px; border: 1px solid #74777b; border-radius: 2px; line-height: 15px; text-align: center; font-weight: 400; }
.gh-repo { height: 53.500px; background: #fafbfc; border-bottom: 1px solid #eceef0; padding-left: 77px; }
.gh-title { display: flex; align-items: center; height: 30px; }
.book { width: 8px; height: 10px; margin-right: 3px; }
.gh-name { width: 338px; font-size: 9px; letter-spacing: -.220px; color: #666; }
.gh-name a, .gh-tip a, .gh-foot a { color: #2b62b5; }
.gh-name .strong { font-weight: 600; }
.counter { display: flex; height: 14.500px; border: 1px solid #dfe1e4; border-radius: 2px; background: #f4f5f7; font-size: 6px; line-height: 12.500px; letter-spacing: -.250px; color: #24292e; font-weight: 600; margin-right: 5px; }
.counter span { display: flex; align-items: center; justify-content: center; gap: 1px; flex: 1; }
.counter b { width: 13.500px; background: #fff; border-left: 1px solid #e1e3e6; text-align: center; font-weight: 500; }
.counter svg { width: 7px; height: 7px; }
.gh-repo svg path, .gh-repo svg circle, .gh-filter svg *, .tick path, .gh-tip path { fill: none; stroke: #6a7077; stroke-width: 1; }
.gh-repo .counter svg * { stroke: #24292e; }
.gh-repo .counter svg .solid { fill: #24292e; stroke: none; }
.w-watch { width: 51px; } .w-star { width: 43px; } .w-fork { width: 42px; }
.gh-tabs { display: flex; height: 23.500px; padding: 4px 0 0 6px; }
.gh-tabs a { display: flex; align-items: center; height: 20px; font-size: 6.800px; letter-spacing: -.160px; color: #5d6369; }
.gh-tabs svg { width: 7px; height: 7px; margin-right: 2px; opacity: .75; }
.gh-tabs em, .gh-subnav em { margin-left: 2.500px; padding: 0 2px; border-radius: 4px; background: #e9ebed; font-size: 5.500px; line-height: 8px; color: #444; }
.t-code { width: 33px; } .gh-tabs .t-issues { width: 49px; padding-left: 5px; background: #fff; border-top: 2px solid #d4703c; border-left: 1px solid #e8eaec; border-right: 1px solid #e8eaec; color: #24292e; margin-right: 6px; }
.gh-tabs .t-issues svg { width: 8px; height: 8px; margin-right: 1px; opacity: 1; }
.t-pull { width: 68px; } .gh-tabs .t-pull { letter-spacing: -.270px; color: #3c4146; } .t-act { width: 44px; } .t-proj { width: 55px; } .t-sec { width: 46px; }
.gh-body { padding: 12px 78px 0 77px; }
.gh-filter { display: flex; align-items: center; height: 17.500px; font-size: 6.800px; }
.gh-query { display: flex; align-items: center; width: 311px; height: 17.500px; padding-left: 5px; border: 1px solid #e0e2e5; border-radius: 2px; background: #fafbfc; color: #6c7177; letter-spacing: -.210px; margin-right: 8px; }
.gh-query svg { width: 8px; height: 8px; margin-right: 3px; opacity: .6; }
.gh-subnav { display: flex; width: 122px; height: 17.500px; border: 1px solid #eceef0; border-radius: 2px; font-weight: 500; color: #4a4f54; margin-right: 9px; }
.gh-subnav a { display: flex; align-items: center; justify-content: center; flex: 1; letter-spacing: -.050px; }
.gh-subnav .s-lab { flex: none; width: 54px; border-right: 1px solid #eceef0; }
.gh-subnav svg { width: 7px; height: 7px; margin-right: 1px; }
.gh-new { width: 45px; height: 17.500px; border-radius: 2px; background: linear-gradient(#6fb65b, #58a045); color: #eef7eb; font-weight: 500; line-height: 17.500px; text-align: center; }
.gh-list { margin-top: 7px; border: 1px solid #e2e4e7; border-radius: 2px; }
.gh-list-head { display: flex; align-items: center; height: 27.500px; padding-left: 8px; background: #f4f5f9; border-bottom: 1px solid #e7e8ec; font-size: 6.800px; letter-spacing: -.180px; color: #6c7177; }
.gh-list-head b { width: 29.500px; font-weight: 600; color: #24292e; }
.dot { width: 8px; height: 8px; margin-right: 3px; color: #24292e; }
.dot.open { color: #3f9b50; margin-top: 1px; }
.tick { width: 7px; height: 7px; margin-right: 2.500px; }
.closed { width: 179.500px; letter-spacing: -.040px; }
.gh-list-head i { display: inline-block; margin: 0 0 1px 2px; border: 1.600px solid transparent; border-top: 2px solid #5a5f65; border-bottom: 0; }
.f-author { width: 41.500px; } .f-label { width: 37.500px; } .f-proj { width: 48px; } .f-mile { width: 54.500px; } .f-assign { width: 49.500px; }
.gh-row { display: flex; height: 28.500px; padding: 5px 0 0 8px; }
.gh-row + .gh-row { border-top: 1px solid #eef0f2; }
.gh-row b { display: block; font-size: 7.800px; line-height: 11px; font-weight: 600; letter-spacing: -.170px; color: #24292e; }
.gh-row small { display: block; font-size: 5.800px; line-height: 10px; letter-spacing: -.340px; color: #6c7177; }
.gh-tip { display: flex; justify-content: center; align-items: center; gap: 1.700px; height: 51px; border-bottom: 1px solid #edeff1; font-size: 6.800px; letter-spacing: -.220px; color: #3c4146; }
.gh-tip svg { width: 6px; height: 9px; }
.gh-tip b { font-weight: 600; }
.gh-foot { display: flex; align-items: center; padding-top: 18px; height: 34px; font-size: 5.800px; letter-spacing: -.330px; color: #6c7177; }
.gh-foot svg { width: 13px; height: 13px; fill: #b3b7bc; }
.foot-left { display: flex; gap: 15.500px; width: 241.500px; }
.foot-right { display: flex; flex: 1; justify-content: space-between; padding-left: 35px; }

/* Brand marks */
.brand-soligity { position: absolute; left: 2194px; top: 361px; display: flex; align-items: center; color: #000; }
.brand-soligity svg { width: 77px; height: 105px; }
.brand-soligity span { margin-left: 6px; padding-top: 4px; font-size: 41px; line-height: 50px; font-weight: 200; letter-spacing: -2px; }
.brand-soligity b { font: 700 43px/50px "Liberation Sans", Arial, sans-serif; letter-spacing: -.300px; }
.brand-github { position: absolute; left: 1657px; top: 836px; display: flex; align-items: center; color: #151113; }
.brand-github svg { width: 46px; height: 46px; fill: #151113; }
.brand-github span { margin-left: 7px; padding-top: 2px; font: 700 38px/46px Roboto, "Liberation Sans", sans-serif; letter-spacing: -2.100px; }
```
